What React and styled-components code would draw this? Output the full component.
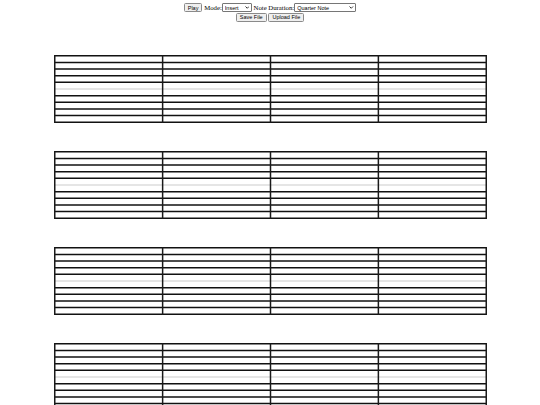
import styled, { createGlobalStyle } from "styled-components";

const GlobalStyle = createGlobalStyle`
  html, body {
    margin: 0;
    padding: 0;
    background: #ffffff;
  }
`;

const Page = styled.div`
  zoom: 0.5;
  width: 1080px;
  padding: 6px 0 20px;
  font-family: "Liberation Serif", "Times New Roman", serif;
  font-size: 14px;
  color: #000;
`;

const Toolbar = styled.div`
  text-align: center;
`;

const ToolRow = styled.div`
  height: 19px;
  line-height: 19px;
  white-space: nowrap;
`;

const Button = styled.button`
  font-family: "Liberation Sans", Arial, sans-serif;
  font-size: 11px;
  height: 18px;
  padding: 0 6px;
  border: 1px solid #8a8a8a;
  border-radius: 3px;
  background: #efefef;
  color: #000;
  vertical-align: middle;
`;

const Label = styled.span`
  font-size: 13.5px;
  vertical-align: middle;
`;

const SelectWrap = styled.span`
  position: relative;
  display: inline-block;
  vertical-align: middle;
  height: 18px;
`;

const Select = styled.select`
  appearance: none;
  font-family: "Liberation Sans", Arial, sans-serif;
  font-size: 11px;
  width: ${(p) => p.$width}px;
  height: 18px;
  padding: 0 14px 0 4px;
  border: 1px solid #767676;
  border-radius: 2px;
  background: #fff;
  color: #000;
  display: block;
`;

const Chevron = styled.svg`
  position: absolute;
  right: 5px;
  top: 6px;
  width: 9px;
  height: 6px;
  pointer-events: none;
`;

const Systems = styled.div`
  display: flex;
  flex-direction: column;
  align-items: center;
  gap: 56px;
  margin-top: 66px;
`;

const StaffSvg = styled.svg`
  display: block;
  width: 866px;
  height: 136px;
`;

const W = 866;
const H = 136;
const SW = 3;
const lineYs = Array.from({ length: 11 }, (_, i) => SW / 2 + (i * (H - SW)) / 10);
const barXs = [0, 1, 2, 3, 4].map((i) => SW / 2 + (i * (W - SW)) / 4);

function Staff() {
  return (
    <StaffSvg viewBox={`0 0 ${W} ${H}`}>
      {lineYs.map((y, i) => (
        <line
          key={i}
          x1={0}
          x2={W}
          y1={y}
          y2={y}
          stroke={i === 5 ? "#dcdcdc" : "#111"}
          strokeWidth={SW}
        />
      ))}
      {barXs.map((x, i) => (
        <line key={i} x1={x} x2={x} y1={0} y2={H} stroke="#1a1a1a" strokeWidth={SW} />
      ))}
    </StaffSvg>
  );
}

function Dropdown({ width, value, options }) {
  return (
    <SelectWrap>
      <Select $width={width} defaultValue={value}>
        {options.map((o) => (
          <option key={o.value} value={o.value}>
            {o.label}
          </option>
        ))}
      </Select>
      <Chevron viewBox="0 0 9 6">
        <path d="M1 1 L4.5 4.5 L8 1" fill="none" stroke="#000" strokeWidth="1.6" />
      </Chevron>
    </SelectWrap>
  );
}

export default function App() {
  return (
    <>
      <GlobalStyle />
      <Page>
        <Toolbar>
          <ToolRow>
            <Button>Play</Button> <Label>Mode:</Label>
            <Dropdown
              width={60}
              value="insert"
              options={[
                { value: "insert", label: "Insert" },
                { value: "delete", label: "Delete" },
              ]}
            />{" "}
            <Label>Note Duration:</Label>
            <Dropdown
              width={124}
              value="quarter"
              options={[
                { value: "whole", label: "Whole Note" },
                { value: "half", label: "Half Note" },
                { value: "quarter", label: "Quarter Note" },
                { value: "eighth", label: "Eighth Note" },
              ]}
            />
          </ToolRow>
          <ToolRow>
            <Button>Save File</Button> <Button>Upload File</Button>
          </ToolRow>
        </Toolbar>
        <Systems>
          {[0, 1, 2, 3].map((s) => (
            <Staff key={s} />
          ))}
        </Systems>
      </Page>
    </>
  );
}
